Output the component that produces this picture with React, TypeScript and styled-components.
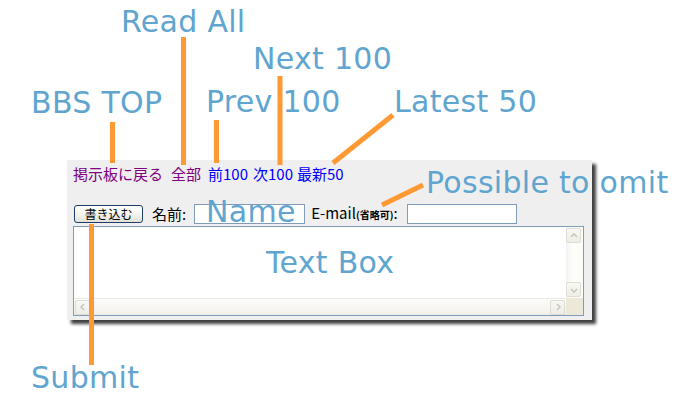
import React from 'react';
import styled, { createGlobalStyle } from 'styled-components';

const GlobalStyle = createGlobalStyle`
  html, body {
    margin: 0;
    padding: 0;
    background: #ffffff;
  }
`;

const Canvas = styled.div`
  position: relative;
  width: 700px;
  height: 400px;
  overflow: hidden;
  padding: 160px 0 0 67px;
  box-sizing: border-box;
`;

const Panel = styled.div`
  width: 525px;
  height: 160px;
  box-sizing: border-box;
  padding: 4px 8px 4px 6px;
  background: #efefef;
  box-shadow: 4px 4px 3px rgba(0, 0, 0, 0.75);
  font-family: 'Noto Sans CJK JP', 'Noto Sans', sans-serif;
  color: #000;
`;

const LinkRow = styled.div`
  display: flex;
  height: 20px;
  line-height: 20px;
  font-size: 15px;
`;

const NavLink = styled.a<{ visited?: boolean; space: number }>`
  color: ${p => (p.visited ? '#800080' : '#0000ff')};
  text-decoration: none;
  margin-left: ${p => p.space}px;
  cursor: pointer;
`;

const FormRow = styled.div`
  display: flex;
  align-items: center;
  height: 20px;
  margin-top: 20px;
  font-size: 15px;
`;

const SubmitButton = styled.button`
  width: 69px;
  height: 18px;
  margin-left: 1px;
  padding: 0;
  border: 1px solid #1d3d6b;
  border-radius: 3px;
  background: linear-gradient(#ffffff 0%, #f3f2ee 55%, #e3e0d6 100%);
  font-family: 'Noto Sans CJK JP', sans-serif;
  font-size: 12px;
  line-height: 16px;
  color: #000;
`;

const Label = styled.span<{ before: number; after: number }>`
  margin-left: ${p => p.before}px;
  margin-right: ${p => p.after}px;
  white-space: nowrap;
  line-height: 20px;
`;

const Small = styled.span`
  font-size: 10px;
  font-weight: bold;
`;

const TextInput = styled.div<{ w: number }>`
  width: ${p => p.w}px;
  height: 20px;
  box-sizing: border-box;
  border: 1px solid #7f9db9;
  background: #fff;
`;

const TextArea = styled.div`
  margin-top: 2px;
  width: 511px;
  height: 90px;
  box-sizing: border-box;
  border: 1px solid #7f9db9;
  background: #fff;
  display: grid;
  grid-template-columns: 1fr 17px;
  grid-template-rows: 1fr 17px;
`;

const VScroll = styled.div`
  display: flex;
  flex-direction: column;
  justify-content: space-between;
  padding: 1px 0;
  background: linear-gradient(to right, #f4f3ee, #fdfdfb 40%, #fbfbf8);
`;

const HScroll = styled.div`
  display: flex;
  justify-content: space-between;
  align-items: center;
  padding: 0 1px;
  border-top: 1px solid #ebeae3;
  background: linear-gradient(#fdfdfb, #f6f5f0 70%, #efede5);
`;

const Corner = styled.div`
  background: #ece9d8;
`;

const ArrowButton = styled.div`
  width: 15px;
  height: 15px;
  box-sizing: border-box;
  border: 1px solid #dedcd3;
  border-radius: 2px;
  background: linear-gradient(#f8f8f4, #eeede6);
  display: flex;
  align-items: center;
  justify-content: center;
`;

const Callout = styled.div<{ x: number; y: number }>`
  position: absolute;
  left: ${p => p.x}px;
  top: ${p => p.y}px;
  font-family: 'DejaVu Sans', Verdana, sans-serif;
  font-size: 30px;
  line-height: 30px;
  letter-spacing: 0.3px;
  color: #5fa5cf;
  white-space: nowrap;
  pointer-events: none;
`;

const Lines = styled.svg`
  position: absolute;
  left: 0;
  top: 0;
  pointer-events: none;
`;

const chevrons: Record<string, string> = {
  up: 'M2 6 L5 3 L8 6',
  down: 'M2 4 L5 7 L8 4',
  left: 'M6 2 L3 5 L6 8',
  right: 'M4 2 L7 5 L4 8',
};

const Arrow = ({ dir }: { dir: string }) => (
  <ArrowButton>
    <svg width="10" height="10" viewBox="0 0 10 10">
      <path d={chevrons[dir]} fill="none" stroke="#c9c8c0" strokeWidth="1.6" />
    </svg>
  </ArrowButton>
);

const links = [
  { text: '掲示板に戻る', visited: true, space: 0 },
  { text: '全部', visited: true, space: 8 },
  { text: '前100', visited: false, space: 7 },
  { text: '次100', visited: false, space: 5 },
  { text: '最新50', visited: false, space: 4 },
];

const callouts = [
  { text: 'Read All', x: 121, y: 7 },
  { text: 'Next 100', x: 253, y: 44 },
  { text: 'BBS TOP', x: 31, y: 88 },
  { text: 'Prev 100', x: 206, y: 87 },
  { text: 'Latest 50', x: 394, y: 87 },
  { text: 'Possible to omit', x: 426, y: 168 },
  { text: 'Name', x: 206, y: 197 },
  { text: 'Text Box', x: 266, y: 248 },
  { text: 'Submit', x: 31, y: 363 },
];

const strokes = [
  [112.5, 122, 112.5, 163],
  [183.5, 37, 183.5, 165],
  [216.5, 120, 216.5, 163],
  [280, 76, 280, 165],
  [393, 115, 333, 163],
  [423, 185, 382, 205],
  [91.5, 224, 91.5, 365],
];

export default function App() {
  return (
    <>
      <GlobalStyle />
      <Canvas>
        <Panel>
          <LinkRow>
            {links.map(l => (
              <NavLink key={l.text} visited={l.visited} space={l.space}>
                {l.text}
              </NavLink>
            ))}
          </LinkRow>
          <FormRow>
            <SubmitButton>書き込む</SubmitButton>
            <Label before={9} after={8}>名前:</Label>
            <TextInput w={111} />
            <Label before={6} after={9}>
              E-mail<Small>(省略可)</Small>:
            </Label>
            <TextInput w={110} />
          </FormRow>
          <TextArea>
            <div />
            <VScroll>
              <Arrow dir="up" />
              <Arrow dir="down" />
            </VScroll>
            <HScroll>
              <Arrow dir="left" />
              <Arrow dir="right" />
            </HScroll>
            <Corner />
          </TextArea>
        </Panel>
        <Lines width="700" height="400">
          {strokes.map(([x1, y1, x2, y2], i) => (
            <line key={i} x1={x1} y1={y1} x2={x2} y2={y2} stroke="#ff9933" strokeWidth="5" />
          ))}
        </Lines>
        {callouts.map(c => (
          <Callout key={c.text} x={c.x} y={c.y}>
            {c.text}
          </Callout>
        ))}
      </Canvas>
    </>
  );
}
